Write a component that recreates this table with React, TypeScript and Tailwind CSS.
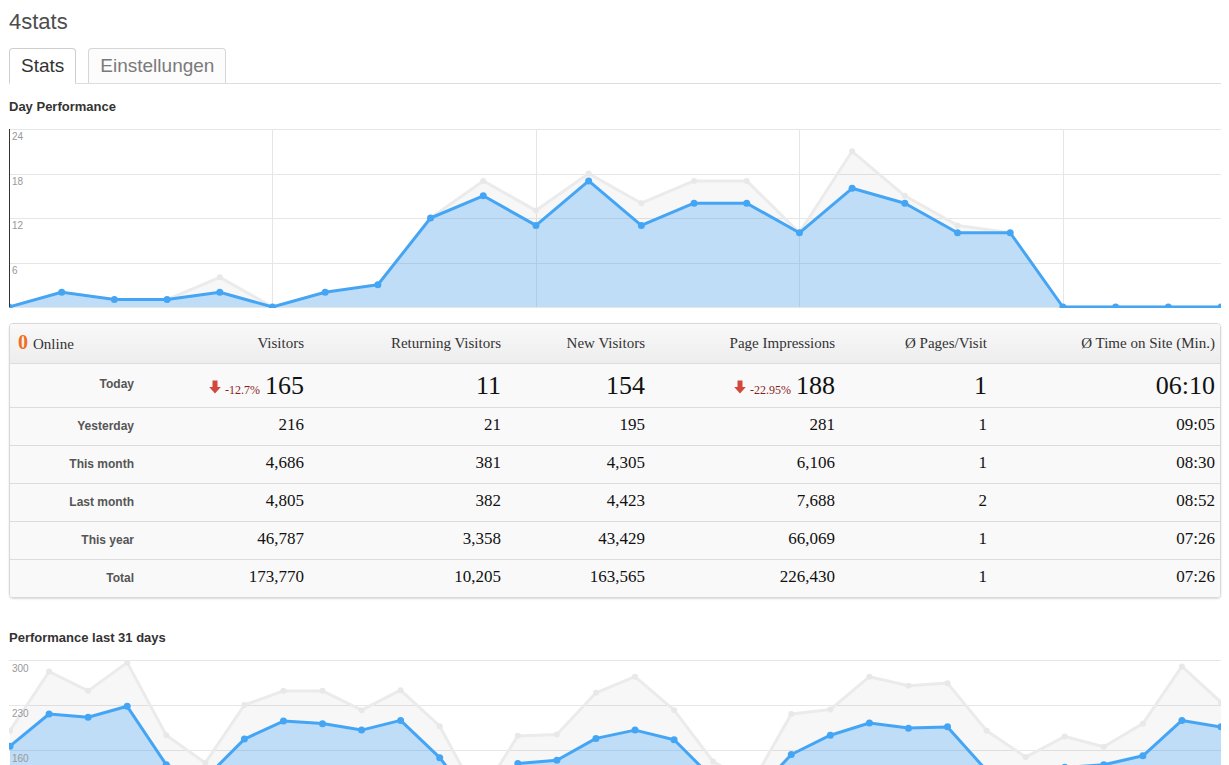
import React from 'react';

type Pt = [number, number];

const dayNow = [0, 2, 1, 1, 2, 0, 2, 3, 12, 15, 11, 17, 11, 14, 14, 10, 16, 14, 10, 10, 0, 0, 0, 0];
const dayPrev = [0, 2, 1, 1, 4, 0, 2, 3, 12, 17, 13, 18, 14, 17, 17, 10, 21, 15, 11, 10, 0, 0, 0, 0];

const monthNow = [
  166, 216, 211, 228, 137, 116, 177, 205, 201, 191, 206, 148, 70, 139, 144, 178,
  191, 176, 115, 88, 153, 183, 202, 194, 196, 128, 115, 133, 137, 151, 206, 196,
];
const monthPrev = [
  190, 282, 252, 296, 183, 140, 230, 252, 252, 222, 253, 197, 85, 182, 184, 249,
  274, 222, 142, 109, 216, 223, 274, 260, 264, 190, 149, 181, 165, 201, 290, 234,
];

interface ChartProps {
  now: number[];
  prev: number[];
  min: number;
  max: number;
  ticks: number[];
  xStart: number;
  xEnd: number;
  height: number;
  labelDy: number;
  vgrid?: number[];
  axis?: boolean;
}

const linePath = (pts: Pt[]) =>
  pts.map((p, i) => `${i ? 'L' : 'M'}${p[0].toFixed(1)},${p[1].toFixed(1)}`).join(' ');

function Chart({ now, prev, min, max, ticks, xStart, xEnd, height, labelDy, vgrid = [], axis }: ChartProps) {
  const w = 1212;
  const n = now.length;
  const px = (i: number) => xStart + (i * (xEnd - xStart)) / (n - 1);
  const py = (v: number) => ((max - v) / (max - min)) * height;
  const nowPts: Pt[] = now.map((v, i) => [px(i), py(v)]);
  const prevPts: Pt[] = prev.map((v, i) => [px(i), py(v)]);
  const area = (pts: Pt[]) =>
    `${linePath(pts)} L${pts[pts.length - 1][0].toFixed(1)},${height} L${pts[0][0].toFixed(1)},${height} Z`;

  return (
    <svg width={w} height={height + 1} className="block font-['Liberation_Sans',sans-serif]">
      {ticks.map((t) => (
        <line key={t} x1={0} x2={w} y1={Math.round(py(t)) + 0.5} y2={Math.round(py(t)) + 0.5} stroke="#e6e6e6" />
      ))}
      {vgrid.map((i) => (
        <line key={i} x1={Math.round(px(i)) + 0.5} x2={Math.round(px(i)) + 0.5} y1={0} y2={height} stroke="#e6e6e6" />
      ))}
      <path d={area(prevPts)} fill="rgba(0,0,0,0.03)" />
      <path d={area(nowPts)} fill="rgba(69,165,245,0.31)" />
      <path d={linePath(prevPts)} fill="none" stroke="#ebebeb" strokeWidth={3} strokeLinejoin="round" />
      {prevPts.map((p, i) => (
        <circle key={i} cx={p[0]} cy={p[1]} r={3} fill="#e8e8e8" />
      ))}
      <path d={linePath(nowPts)} fill="none" stroke="#45a5f5" strokeWidth={3} strokeLinejoin="round" />
      {nowPts.map((p, i) => (
        <circle key={i} cx={p[0]} cy={p[1]} r={3.5} fill="#45a5f5" />
      ))}
      {axis && <line x1={0.5} x2={0.5} y1={0} y2={height} stroke="#333" />}
      {ticks
        .filter((t) => t !== min)
        .map((t) => (
          <text key={t} x={3} y={Math.round(py(t)) + labelDy} fontSize={10} fill="#999">
            {t}
          </text>
        ))}
    </svg>
  );
}

function DownArrow() {
  return (
    <svg width="12" height="14" viewBox="0 0 12 14" className="shrink-0">
      <path d="M3.5 0.5h5v6.5h3.3L6 13.5 0.2 7h3.3z" fill="#d4473c" />
    </svg>
  );
}

const cols = 'grid grid-cols-[132px_170px_197px_144px_190px_152px_1fr]';
const serif = "font-['Liberation_Serif',Georgia,serif]";

const headers = ['Visitors', 'Returning Visitors', 'New Visitors', 'Page Impressions', 'Ø Pages/Visit', 'Ø Time on Site (Min.)'];

const rows = [
  { label: 'Yesterday', values: ['216', '21', '195', '281', '1', '09:05'] },
  { label: 'This month', values: ['4,686', '381', '4,305', '6,106', '1', '08:30'] },
  { label: 'Last month', values: ['4,805', '382', '4,423', '7,688', '2', '08:52'] },
  { label: 'This year', values: ['46,787', '3,358', '43,429', '66,069', '1', '07:26'] },
  { label: 'Total', values: ['173,770', '10,205', '163,565', '226,430', '1', '07:26'] },
];

function BigValue({ value, change }: { value: string; change?: string }) {
  return (
    <div className="flex justify-end items-baseline pr-2">
      {change && (
        <>
          <DownArrow />
          <span className="ml-[4px] mr-[5px] text-[12px] text-[#8b1c1c]">{change}</span>
        </>
      )}
      <span className="text-[26px] leading-[30px] text-[#111]">{value}</span>
    </div>
  );
}

function StatsTable() {
  return (
    <div className={`${serif} border border-[#d8d8d8] rounded-[4px] shadow-[0_1px_2px_rgba(0,0,0,0.15)] overflow-hidden`}>
      <div className={`${cols} h-[40px] items-center bg-gradient-to-b from-[#f9f9f9] to-[#ededed] border-b border-[#dcdcdc] text-[15px] text-[#333]`}>
        <div className="pl-2 flex items-baseline gap-[5px]">
          <span className="text-[20px] font-bold text-[#f26d21] leading-none">0</span>
          <span>Online</span>
        </div>
        {headers.map((h, i) => (
          <div key={h} className={`text-right ${i === 5 ? 'pr-[5px]' : 'pr-2'}`}>
            {h}
          </div>
        ))}
      </div>
      <div className={`${cols} h-[43px] items-start pt-[7px] bg-[#f9f9f9]`}>
        <div className="mt-[3px] pr-2 text-right font-['Liberation_Sans',sans-serif] text-[12px] leading-5 font-bold text-[#555]">
          Today
        </div>
        <BigValue value="165" change="-12.7%" />
        <BigValue value="11" />
        <BigValue value="154" />
        <BigValue value="188" change="-22.95%" />
        <BigValue value="1" />
        <div className="pr-[5px] text-right text-[26px] leading-[30px] text-[#111]">06:10</div>
      </div>
      {rows.map((r) => (
        <div key={r.label} className={`${cols} h-[38px] items-start pt-[7px] border-t border-[#dcdcdc] bg-[#f9f9f9]`}>
          <div className="pt-[1px] pr-2 text-right font-['Liberation_Sans',sans-serif] text-[12px] leading-5 font-bold text-[#555]">
            {r.label}
          </div>
          {r.values.map((v, i) => (
            <div key={i} className={`text-right text-[17px] leading-5 text-[#111] ${i === 5 ? 'pr-[5px]' : 'pr-2'}`}>
              {v}
            </div>
          ))}
        </div>
      ))}
    </div>
  );
}

export default function App() {
  return (
    <div className="w-[1229px] pl-[9px] pr-[8px] pb-10 bg-white font-['Liberation_Sans',Arial,sans-serif]">
      <h1 className="pt-[10px] text-[22px] leading-6 text-[#4d4d4d]">4stats</h1>

      <div className="mt-[14px] flex gap-[12px] h-[36px] border-b border-[#dddddd]">
        <div className="-mb-px h-[36px] px-[11px] pt-[6px] border border-[#cfcfcf] border-b-white rounded-t-[4px] bg-white text-[19px] leading-[22px] text-[#333]">
          Stats
        </div>
        <div className="-mb-px h-[35px] px-[11px] pt-[6px] border border-[#d6d6d6] border-b-0 rounded-t-[4px] bg-[#fcfcfc] text-[19px] leading-[22px] text-[#7a7a7a]">
          Einstellungen
        </div>
      </div>

      <h2 className="mt-[15px] text-[13px] leading-4 font-bold text-[#333]">Day Performance</h2>
      <div className="mt-[14px]">
        <Chart
          now={dayNow}
          prev={dayPrev}
          min={0}
          max={24}
          ticks={[24, 18, 12, 6, 0]}
          xStart={0}
          xEnd={1212}
          height={178}
          labelDy={11}
          vgrid={[5, 10, 15, 20]}
          axis
        />
      </div>

      <div className="mt-[15px]">
        <StatsTable />
      </div>

      <h2 className="mt-[32px] text-[13px] leading-4 font-bold text-[#333]">Performance last 31 days</h2>
      <div className="mt-[14px]">
        <Chart
          now={monthNow}
          prev={monthPrev}
          min={20}
          max={300}
          ticks={[300, 230, 160, 90, 20]}
          xStart={1}
          xEnd={1212}
          height={180}
          labelDy={12}
        />
      </div>
    </div>
  );
}
